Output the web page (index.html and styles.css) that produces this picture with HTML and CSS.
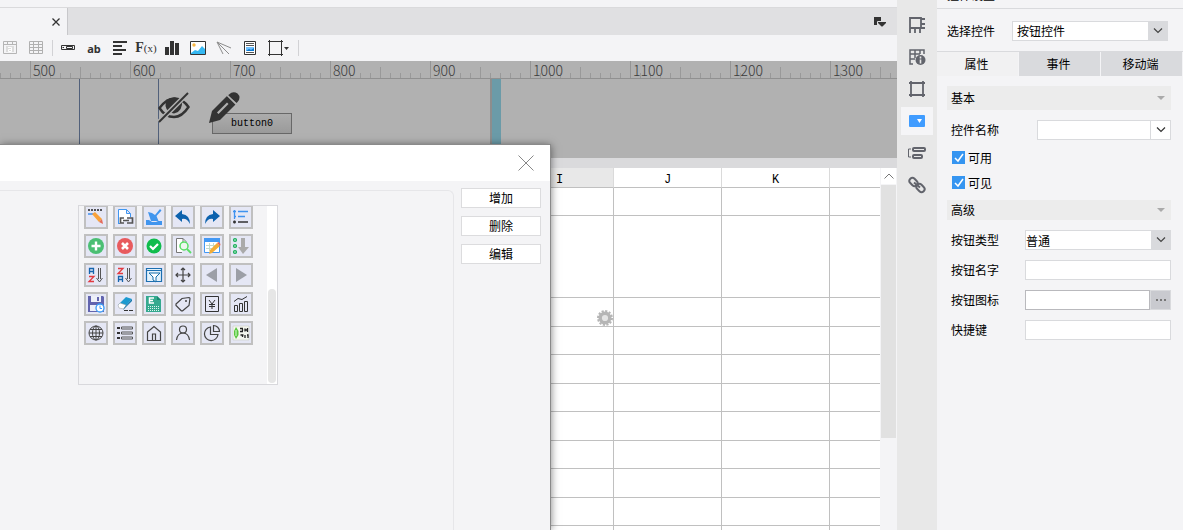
FILE: index.html
```html
<!DOCTYPE html>
<html lang="zh-CN">
<head>
<meta charset="utf-8">
<title>按钮控件</title>
<link rel="stylesheet" href="styles.css">
</head>
<body>
<div class="app">
  <main class="work">
    <div class="strip"></div>
    <div class="tabs">
      <div class="doc-tab"><button class="plain" aria-label="关闭标签"><svg width="10" height="10" viewBox="0 0 10 10"><path d="M1.500 1.500l7 7M8.500 1.500l-7 7" stroke="#333" stroke-width="1.300"/></svg></button></div>
      <button class="plain tab-list" aria-label="标签列表"><svg width="12" height="10" viewBox="0 0 12 10"><path d="M0 0h7v4H4v4H0z" fill="#333"/><path d="M4 5h8v1L8.500 9.500h-1L4 6z" fill="#333"/><path d="M3.500 8V4.500H8" fill="none" stroke="#e0e0e2"/></svg></button>
    </div>
    <div class="toolbar">
      <button class="plain tool" aria-label="文本表格"><svg width="16" height="16" viewBox="0 0 16 16"><g fill="none" stroke="#b5b5b5"><path d="M1.500 1.500h13v12h-13zM1 4.500h14M5.500 1v3M10.500 1v3"/></g><path d="M4 6h8v6H4z" fill="#dcdcdc"/><path d="M6 7.500h3.500v4H6.500v-2H9" fill="none" stroke="#fff"/></svg></button>
      <button class="plain tool" aria-label="表格"><svg width="16" height="16" viewBox="0 0 16 16"><path d="M1.500 1.500h13v12h-13zM1 4.500h14M1 7.500h14M1 10.500h14M5.500 2v12M10.500 2v12" fill="none" stroke="#b0b0b0"/></svg></button>
      <span class="sep"></span>
      <button class="plain tool" aria-label="文本框"><svg width="16" height="16" viewBox="0 0 16 16"><path d="M1.500 5.500h13v4h-13zM4 7.500H2.500M6.500 6.500h6v2h-6z" fill="none" stroke="#333"/></svg></button>
      <button class="plain tool ab">ab</button>
      <button class="plain tool" aria-label="段落"><svg width="16" height="16" viewBox="0 0 16 16"><path d="M1 2h14M1 6h9M1 10h13M1 14h9" stroke="#333" stroke-width="1.800"/></svg></button>
      <button class="plain tool fx">F<small>(x)</small></button>
      <button class="plain tool" aria-label="图表"><svg width="16" height="16" viewBox="0 0 16 16"><path d="M1 7h4v8H1zM6 1h4v14H6zM11 3h4v12h-4z" fill="#333"/></svg></button>
      <button class="plain tool" aria-label="图片"><svg width="16" height="16" viewBox="0 0 16 16"><path d="M.5 1.500h15v13H.5z" fill="#fff" stroke="#333"/><circle cx="4" cy="5" r="1.700" fill="#f9b641"/><path d="M1 13l4-3 3 1 4-5 3 3v5H1z" fill="#35b8f2"/></svg></button>
      <button class="plain tool" aria-label="斜线"><svg width="16" height="16" viewBox="0 0 16 16"><path d="M1 2l14 6M1 2l12 12M1 2l6 12" fill="none" stroke="#8c8c8c"/></svg></button>
      <button class="plain tool" aria-label="图文"><svg width="16" height="16" viewBox="0 0 16 16"><path d="M2.500 1.500h11v13h-11z" fill="#fff" stroke="#333"/><path d="M4 3.500h8M4 5.500h8M4 12.500h8" stroke="#555"/><path d="M4 7h8v4H4z" fill="#71c1ff"/><path d="M4 11l3-2 2 1 3-2v3z" fill="#0876cf"/></svg></button>
      <button class="plain tool wide" aria-label="边框"><svg width="24" height="16" viewBox="0 0 24 16"><path d="M2.500 0v16M14.500 0v16M1 1.500h15M1 14.500h15" stroke="#333"/><path d="M17 7h5l-2.500 3z" fill="#333"/></svg></button>
      <span class="sep"></span>
    </div>
    <div class="ruler"><span>500</span><span>600</span><span>700</span><span>800</span><span>900</span><span>1000</span><span>1100</span><span>1200</span><span>1300</span></div>
    <div class="canvas">
      <i class="guide first"></i><i class="guide second"></i><i class="edge"></i>
      <button class="node">button0</button>
      <svg class="eye" width="32" height="32" viewBox="0 0 32 32"><path d="M1.500 16Q9 6 17 6.500Q25 7 30.500 15Q24 25 16 25Q7 25 1.500 16z" fill="none" stroke="#333" stroke-width="2.400"/><path d="M8 8Q16 3 24 8Q25 20 16 21.500Q9 21 7.500 14z" fill="#333"/><path d="M1 30L30 1" stroke="#b1b1b1" stroke-width="5"/><path d="M1 30L30 1" stroke="#333" stroke-width="2"/></svg>
      <svg class="pencil" width="32" height="32" viewBox="0 0 32 32"><path d="M0 31l3-12L18 4l8.500 8.500L11 28z" fill="#333"/><path d="M20 2.500q4-4 8.500-1 4 4 0 8.500l-1 1L19 3.500z" fill="#333"/><path d="M18 3l9.500 9.500" stroke="#b1b1b1" stroke-width="1.200"/><path d="M8 20.500L18 10.500l1.500 1.500-10 10z" fill="#b1b1b1"/></svg>
    </div>
    <div class="split"></div>
    <div class="sheet-wrap">
      <table class="sheet">
        <colgroup><col class="lead"><col class="unit"><col class="unit"><col class="unit"><col></colgroup>
        <thead><tr><th></th><th class="current">I</th><th>J</th><th>K</th><th></th></tr></thead>
        <tbody>
          <tr class="h28"><td></td><td></td><td></td><td></td><td></td></tr>
          <tr class="h82"><td></td><td></td><td></td><td></td><td></td></tr>
          <tr class="h29"><td></td><td class="gear"><svg width="16" height="16" viewBox="0 0 16 16"><circle cx="8" cy="8" r="7" fill="none" stroke="#b5b5b5" stroke-width="2" stroke-dasharray="2.200 1.460"/><circle cx="8" cy="8" r="4.800" fill="#e4e4e4" stroke="#b5b5b5" stroke-width="3.400"/></svg></td><td></td><td></td><td></td></tr>
          <tr class="h28"><td></td><td></td><td></td><td></td><td></td></tr>
          <tr class="h29"><td></td><td></td><td></td><td></td><td></td></tr>
          <tr class="h28"><td></td><td></td><td></td><td></td><td></td></tr>
          <tr class="h29"><td></td><td></td><td></td><td></td><td></td></tr>
          <tr class="h28"><td></td><td></td><td></td><td></td><td></td></tr>
          <tr class="h29"><td></td><td></td><td></td><td></td><td></td></tr>
          <tr class="h28"><td></td><td></td><td></td><td></td><td></td></tr>
          <tr class="h29"><td></td><td></td><td></td><td></td><td></td></tr>
        </tbody>
      </table>
      <div class="scroll"><button class="plain up" aria-label="向上滚动"><svg width="12" height="8" viewBox="0 0 12 8"><path d="M1.500 6.500L6 2l4.500 4.500" fill="none" stroke="#777"/></svg></button><div class="thumb"></div></div>
    </div>
  </main>

  <nav class="rail">
    <button class="plain" aria-label="单元格元素"><svg width="18" height="18" viewBox="0 0 18 18"><path d="M2 17V2h11v10H2M7 12v5M12 12v5M13 3h4M13 8h4M13 12h4" fill="none" stroke="#62646c" stroke-width="1.800"/></svg></button>
    <button class="plain" aria-label="单元格属性"><svg width="18" height="18" viewBox="0 0 18 18"><path d="M5 16H2V2h14v4M2 6h10M2 11h5M7 2v8M12 2v4" fill="none" stroke="#62646c" stroke-width="1.500"/><circle cx="12.500" cy="12" r="5" fill="#62646c"/><path d="M12.500 8.500v2M12.500 11.500v4" stroke="#e8e8e8" stroke-width="1.600"/></svg></button>
    <button class="plain" aria-label="悬浮元素"><svg width="18" height="18" viewBox="0 0 18 18"><path d="M3 1v16M15 1v16M1 3h16M1 15h16" stroke="#62646c" stroke-width="1.800"/></svg></button>
    <button class="plain active" aria-label="控件设置"><svg width="18" height="18" viewBox="0 0 18 18"><rect x="1" y="3" width="16" height="12" rx="1" fill="#409cff"/><path d="M9 7h5l-2.500 4z" fill="#fff"/></svg></button>
    <button class="plain" aria-label="条件属性"><svg width="18" height="18" viewBox="0 0 18 18"><path d="M3 5H.500v8H3" fill="none" stroke="#62646c"/><rect x="5" y="4" width="12" height="3" rx="1" fill="none" stroke="#62646c" stroke-width="2"/><rect x="5" y="11" width="9" height="3" rx="1" fill="none" stroke="#62646c" stroke-width="2"/></svg></button>
    <button class="plain" aria-label="超级链接"><svg width="18" height="18" viewBox="0 0 18 18"><g fill="none" stroke="#62646c" stroke-width="2"><rect x="1" y="3" width="9" height="6" rx="3" transform="rotate(45 5.500 6)"/><rect x="8" y="9" width="9" height="6" rx="3" transform="rotate(45 12.500 12)"/><path d="M6 6.500l6 5"/></g></svg></button>
  </nav>

  <aside class="panel">
    <div class="panel-title"><span>控件设置</span></div>
    <div class="chooser"><label for="kind">选择控件</label><div class="pick"><select id="kind"><option>按钮控件</option></select><span class="drop"><svg width="10" height="6" viewBox="0 0 10 6"><path d="M1 .5l4 4 4-4" fill="none" stroke="#444" stroke-width="1.200"/></svg></span></div></div>
    <div class="modes"><button class="on">属性</button><button>事件</button><button>移动端</button></div>
    <div class="props">
      <button class="section tall">基本<svg width="8" height="4" viewBox="0 0 8 4"><path d="M0 0h8L4 4z" fill="#aaa"/></svg></button>
      <div class="row name"><label for="name">控件名称</label><div class="combo"><input id="name" type="text"><button aria-label="展开"><svg width="10" height="6" viewBox="0 0 10 6"><path d="M1 .5l4 4 4-4" fill="none" stroke="#333" stroke-width="1.200"/></svg></button></div></div>
      <label class="check"><input type="checkbox" checked>可用</label>
      <label class="check"><input type="checkbox" checked>可见</label>
      <button class="section">高级<svg width="8" height="4" viewBox="0 0 8 4"><path d="M0 0h8L4 4z" fill="#aaa"/></svg></button>
      <div class="row"><label for="type">按钮类型</label><div class="pick flush"><select id="type"><option>普通</option></select><span class="drop"><svg width="10" height="6" viewBox="0 0 10 6"><path d="M1 .5l4 4 4-4" fill="none" stroke="#444" stroke-width="1.200"/></svg></span></div></div>
      <div class="row"><label for="title">按钮名字</label><input id="title" type="text"></div>
      <div class="row"><label for="icon">按钮图标</label><div class="browse"><input id="icon" type="text"><button aria-label="选择图标"><svg width="12" height="2" viewBox="0 0 12 2"><path d="M1 0h2v2H1zM5 0h2v2H5zM9 0h2v2H9z" fill="#777"/></svg></button></div></div>
      <div class="row"><label for="key">快捷键</label><input id="key" type="text"></div>
    </div>
  </aside>

  <section class="dialog" role="dialog" aria-label="图标">
    <header><button class="plain" aria-label="关闭"><svg width="16" height="16" viewBox="0 0 16 16"><path d="M.5 .5l15 15M15.500 .5l-15 15" stroke="#888"/></svg></button></header>
    <div class="dialog-body">
      <div class="group">
        <div class="icon-box">
          <div class="icons">
            <button><svg viewBox="0 0 20 20"><path d="M2 3h14" stroke="#222" stroke-width="1.500" stroke-dasharray="2 1"/><path d="M2 7h6" stroke="#3c8fee" stroke-width="1.500"/><path d="M6 7l3-2 7 7-3 3z" fill="#f9a23b"/><path d="M13 15l3-3 1 5z" fill="#e46b5b"/></svg></button>
            <button><svg viewBox="0 0 20 20"><path d="M3.500 17V2.500h8l4 4V10M11.500 2.500v4h4M3 16.500h2" fill="#fff" stroke="#4096f0"/><path d="M9 11H5.500v5H9M12 11h5.500v5H12M8 13.500h6" fill="none" stroke="#555" stroke-width="1.700"/></svg></button>
            <button><svg viewBox="0 0 20 20"><path d="M4 5l4 1 3 2 5-6 1.500 1.500L12.500 9l2 5H7z" fill="#4095ee"/><path d="M2 13h3l3 2h4l2-1h4v4H2z" fill="#4095ee"/></svg></button>
            <button><svg viewBox="0 0 20 20"><path d="M2 9l7-6v4q8 1 8 10-3-6-8-5v3z" fill="#0c62ae"/></svg></button>
            <button><svg viewBox="0 0 20 20"><path d="M18 9l-7-6v4q-8 1-8 10 3-6 8-5v3z" fill="#0c62ae"/></svg></button>
            <button><svg viewBox="0 0 20 20"><path d="M3.500 3v9M2 4.500h3M7 4.500h10M3 9.500h2M7 9.500h7" fill="none" stroke="#3f92ef" stroke-width="1.300"/><path d="M2 15h3M3.500 13.500v3M7 15h10" stroke="#333" stroke-width="1.600"/></svg></button>

            <button><svg viewBox="0 0 20 20"><circle cx="10" cy="10" r="8" fill="#4bbf73"/><path d="M10 5.500v9M5.500 10h9" stroke="#fff" stroke-width="2.400"/></svg></button>
            <button><svg viewBox="0 0 20 20"><circle cx="10" cy="10" r="8" fill="#e85b5e"/><path d="M7 7l6 6M13 7l-6 6" stroke="#fff" stroke-width="2.600"/></svg></button>
            <button><svg viewBox="0 0 20 20"><circle cx="10" cy="10" r="7.500" fill="#10bc4c"/><path d="M6 10l3 3 5-5" fill="none" stroke="#fff" stroke-width="2.200"/></svg></button>
            <button><svg viewBox="0 0 20 20"><path d="M9 16.500H3.500v-14H10l3 3v2M10 2.500v4" fill="#fff" stroke="#777"/><circle cx="11" cy="10" r="4" fill="#edf7ee" stroke="#59df65" stroke-width="1.500"/><path d="M14 13l4 4" stroke="#59df65" stroke-width="1.800"/></svg></button>
            <button><svg viewBox="0 0 20 20"><path d="M2.500 2.500h15v14h-15z" fill="#fff" stroke="#4298f4"/><path d="M2 2h16v4H2z" fill="#4298f4"/><path d="M4 9.500h10M4 12.500h8M7.500 7v8M11.500 7v4" stroke="#c3d9ca"/><path d="M15 7l3 3-8 7-3 1 1-4z" fill="#f2ad38"/><path d="M15 7l1.500-1 2 2-.5 2z" fill="#e86555"/></svg></button>
            <button><svg viewBox="0 0 20 20"><g fill="#98ddb4" stroke="#18ae59" stroke-width="1.200"><circle cx="4" cy="4" r="1.500"/><circle cx="4" cy="10" r="1.500"/><circle cx="4" cy="16" r="1.500"/></g><path d="M10 2h4v9h4l-6 7-5-7h3z" fill="#aaa"/></svg></button>

            <button><svg viewBox="0 0 20 20"><path d="M3.500 9V3.500h4V9M3.500 6.500h4" fill="none" stroke="#1565ad" stroke-width="1.300"/><path d="M3 11.500h5l-5 5h5" fill="none" stroke="#e23b40" stroke-width="1.300"/><path d="M12.500 3v11M14.500 3v11M10.500 13l3 4 3-4" fill="none" stroke="#555"/></svg></button>
            <button><svg viewBox="0 0 20 20"><path d="M3 3.500h5l-5 5h5" fill="none" stroke="#e23b40" stroke-width="1.300"/><path d="M3.500 17v-5.500h4V17M3.500 14.500h4" fill="none" stroke="#1565ad" stroke-width="1.300"/><path d="M12.500 3v11M14.500 3v11M10.500 13l3 4 3-4" fill="none" stroke="#555"/></svg></button>
            <button><svg viewBox="0 0 20 20"><path d="M2.500 3.500h15v13h-15zM2 5.500h16" fill="#e4f2fb" stroke="#1c6fb0" stroke-width="1.200"/><path d="M5 8h11l-4 4v5l-3-2v-3z" fill="#fff" stroke="#146da9"/></svg></button>
            <button><svg viewBox="0 0 20 20"><path d="M10 3v14M3 10h14M8 5l2-2 2 2M8 15l2 2 2-2M5 8l-2 2 2 2M15 8l2 2-2 2" fill="none" stroke="#444" stroke-width="1.200"/></svg></button>
            <button><svg viewBox="0 0 20 20"><path d="M4 10l11-7v14z" fill="#9c9fa7"/></svg></button>
            <button><svg viewBox="0 0 20 20"><path d="M16 10L5 3v14z" fill="#9c9fa7"/></svg></button>

            <button><svg viewBox="0 0 20 20"><path d="M2 2h15l1 1v15H2z" fill="#6264ae"/><path d="M5 2h10v6H5zM4 11h10v6H4z" fill="#edf0f8"/><path d="M11 3h2v4h-2z" fill="#6264ae"/><circle cx="14" cy="14" r="4" fill="#fff" stroke="#389af6" stroke-width="1.300"/><path d="M14 11.500v3h2" fill="none" stroke="#389af6"/></svg></button>
            <button><svg viewBox="0 0 20 20"><path d="M3 11l8-8 6 2-8 9z" fill="#1b9ad0"/><path d="M3 11l2-2 6 2-2 4-5-1z" fill="#fff" stroke="#999" stroke-width=".5"/><path d="M17 5l-8 9-1 2 9-9z" fill="#1776a9"/><path d="M9 16.500h9" stroke="#333" stroke-dasharray="4 1"/></svg></button>
            <button><svg viewBox="0 0 20 20"><path d="M2 2h11l4 4v12H2z" fill="#35a98e"/><path d="M13 2v4h4z" fill="#168a70"/><path d="M10 4H5.500v5H10M5.500 6.500H9" fill="none" stroke="#fff" stroke-width="1.500"/><path d="M4 12.500h12M4 14.500h12M4 16.500h12" stroke="#dff6ef" stroke-dasharray="1 1"/></svg></button>
            <button><svg viewBox="0 0 20 20"><path d="M3 10l6-5.500 7-1q1 0 1 1l-1 7-6 5q-1 1-2 0l-5-5z" fill="none" stroke="#444" stroke-width="1.200"/><circle cx="13" cy="7" r="1" fill="#444"/></svg></button>
            <button><svg viewBox="0 0 20 20"><path d="M3.500 2.500h13v15h-13z" fill="none" stroke="#333"/><path d="M7 6l3 4 3-4M10 10v5M7 10.500h6M7 12.500h6" fill="none" stroke="#333"/></svg></button>
            <button><svg viewBox="0 0 20 20"><path d="M3.500 11.500h3v6h-3zM8.500 9.500h3v8h-3zM13.500 7.500h3v10h-3zM3 7.500l4-3 4 1 5-3" fill="none" stroke="#333"/></svg></button>

            <button><svg viewBox="0 0 20 20"><g fill="none" stroke="#444"><circle cx="10" cy="10" r="7"/><ellipse cx="10" cy="10" rx="3.500" ry="7"/><path d="M3 10h14M10 3v14M4 6.500h12M4 13.500h12"/></g></svg></button>
            <button><svg viewBox="0 0 20 20"><path d="M2 5h3M2 10h3M2 15h3" stroke="#333" stroke-width="2"/><path d="M6.500 4h11v2h-11zM6.500 9h11v2h-11zM6.500 14h11v2h-11z" fill="none" stroke="#555"/></svg></button>
            <button><svg viewBox="0 0 20 20"><path d="M3.500 9L10 3.500 16.500 9v8.500h-13zM8.500 17v-6h3v6" fill="none" stroke="#444" stroke-width="1.200"/></svg></button>
            <button><svg viewBox="0 0 20 20"><circle cx="10" cy="6.500" r="3.500" fill="none" stroke="#444" stroke-width="1.200"/><path d="M3.500 17q1-7 6.500-7t6.500 7" fill="none" stroke="#444" stroke-width="1.200"/></svg></button>
            <button><svg viewBox="0 0 20 20"><path d="M8.500 4v7.500H16A6.800 6.800 0 1 1 8.500 4zM11.500 2.500v6h6a6 6 0 0 0-6-6z" fill="none" stroke="#444" stroke-width="1.200"/></svg></button>
            <button><svg viewBox="0 0 20 20"><path d="M2 3h16v14H2z" fill="#f4f6ee" stroke="#c9ccc4" stroke-width=".6"/><path d="M5 4l2.500 4v4L5 16l-2-4V8z" fill="#5ac63e"/><path d="M5 7v6" stroke="#d8ffd1"/><path d="M9 5.500h3M9 8.500h3M11.500 6v2M14 5.500v3M16.500 5v4M14 7h2M9.500 12h3M11.500 12v2M14 12v3M16 12h1v3" fill="none" stroke="#222" stroke-width="1.300"/></svg></button>
          </div>
          <div class="icon-scroll"><i></i></div>
        </div>
      </div>
      <div class="actions"><button>增加</button><button>删除</button><button>编辑</button></div>
    </div>
  </section>
</div>
</body>
</html>
```
FILE: styles.css
```css
* { box-sizing: border-box; }
body, button, input, select { font-family: "Noto Sans CJK SC", sans-serif; font-size: 12px; color: #000; }
body { margin: 0; background: #f4f4f6; line-height: 18px; }
button { padding: 0; border: 0; border-radius: 0; line-height: 18px; }
svg { display: block; flex: none; }
.plain { display: flex; align-items: center; justify-content: center; background: none; }
.app { position: relative; display: flex; height: 100vh; overflow: hidden; }
.work { flex: 1; min-width: 0; display: flex; flex-direction: column; overflow: hidden; }
.strip { flex: none; height: 7px; }
.tabs { flex: none; height: 28px; display: flex; justify-content: space-between; align-items: center; background: #e0e0e2; border-top: 1px solid #dadadc; padding-right: 11px; }
.doc-tab { width: 68px; height: 100%; display: flex; align-items: center; justify-content: flex-end; padding-right: 6px; background: #f4f4f6; border-right: 1px solid #c8c8cb; }

.toolbar { flex: none; height: 26px; display: flex; align-items: center; gap: 2px; margin-left: -2px; }
.tool { width: 24px; height: 24px; flex: none; }
.wide { width: 30px; }
.sep { width: 1px; height: 16px; margin: 0 1px 0 2px; background: #d2d2d5; }
.ab { font: bold 11px "Noto Sans", sans-serif; color: #333; }
.fx { font: bold 14px "Liberation Serif", serif; color: #333; }
.fx small { font-size: 11px; font-weight: normal; }

.ruler { flex: none; height: 18px; padding-left: 30px; display: flex; overflow: hidden; border-bottom: 1px solid #909090; background: repeating-linear-gradient(90deg, #999 0 1px, transparent 1px 10px) 0 12px / 100% 5px no-repeat, repeating-linear-gradient(90deg, transparent 0 30px, #999 30px 31px, transparent 31px 50px) 0 6px / 100% 11px no-repeat, #b1b1b1; }
.ruler span { flex: none; width: 100px; padding-left: 2px; border-left: 1px solid #949494; color: #3b3b3b; font-size: 14px; font-weight: 300; line-height: 19px; }

.canvas { flex: none; position: relative; height: 79px; overflow: hidden; background: #b1b1b1; }
.guide, .edge { position: absolute; top: 0; bottom: 0; }
.guide { width: 1px; background: #52617b; }
.first { left: 79px; }
.second { left: 158px; }
.edge { left: 490px; width: 11px; background: #6b9ba8; border-left: 2px solid #8d8d8d; }
.node { position: absolute; left: 212px; top: 34px; width: 80px; height: 21px; border: 1px solid #686868; background: linear-gradient(#acacac, #9a9a9a); font: 10px "Liberation Mono", monospace; }
.eye { position: absolute; left: 158px; top: 13px; }
.pencil { position: absolute; left: 209px; top: 13px; }
.split { flex: none; height: 10px; background: #dadadc; }

.sheet-wrap { flex: 1; min-height: 0; display: flex; align-items: flex-start; overflow: hidden; }
.sheet { flex: 1; width: 0; table-layout: fixed; border-collapse: separate; border-spacing: 0; background: #fff; }
.lead { width: 506px; }
.unit { width: 108px; }
th, td { padding: 0; border-right: 1px solid #c0c0c0; border-bottom: 1px solid #c0c0c0; }
th { height: 20px; padding-top: 4px; font: 12px "Liberation Mono", monospace; border-right-color: #dadada; }
.current { background: #e8e8e8; }
th:last-child, td:last-child { border-right: 0; }
.h28 { height: 28px; }
.h29 { height: 29px; }
.h82 { height: 82px; }
.gear { vertical-align: bottom; }
.gear svg { margin-left: auto; }
.scroll { flex: none; width: 17px; height: 270px; padding: 0 1px; display: flex; flex-direction: column; }
.up { height: 16px; margin-bottom: 1px; background: #fff; }
.thumb { flex: 1; background: #e1e1e1; }

.rail { flex: none; width: 40px; padding-top: 11px; display: flex; flex-direction: column; align-items: center; gap: 4px; background: #e8e8e8; }
.rail button { width: 32px; height: 28px; }
.rail .active { background: #f5f5f7; }

.panel { flex: none; width: 246px; background: #f4f4f6; }
.panel-title { height: 9px; padding: 0 0 5px 10px; display: flex; align-items: flex-end; line-height: 16px; overflow: hidden; border-bottom: 1px solid #d9dadd; }
.chooser { height: 43px; padding: 1px 15px 0 10px; display: flex; align-items: center; gap: 17px; border-bottom: 1px solid #d9dadd; }
.chooser .pick { flex: 1; }
.pick { position: relative; height: 20px; }
.pick select { width: 100%; height: 20px; padding: 0 20px 0 4px; display: block; appearance: none; border: 1px solid #d9dadd; border-radius: 0; background: #fff; }
.flush select { padding-left: 0; }
.drop { position: absolute; right: 0; top: 0; width: 20px; height: 20px; display: flex; align-items: center; justify-content: center; background: #d9dadd; pointer-events: none; }
.modes { display: grid; grid-template-columns: repeat(3, 1fr); gap: 1px; padding-right: 1px; }
.modes button { height: 24px; padding-right: 2px; background: #d9dadd; }
.modes .on { background: #f1f1f2; }
.props { padding: 10px 12px 0 10px; }
.section { width: 100%; height: 20px; padding: 0 6px 0 4px; display: flex; align-items: center; justify-content: space-between; background: #ececec; }
.tall { height: 24px; }
.row { margin-top: 10px; padding-left: 4px; display: grid; grid-template-columns: 74px 1fr; align-items: center; height: 20px; }
.row input { width: 100%; min-width: 0; height: 20px; border: 1px solid #d9dadd; border-radius: 0; background: #fff; }
.name { grid-template-columns: 86px 1fr; margin-bottom: 5px; }
.combo, .browse { display: flex; }
.combo button { flex: none; width: 20px; display: flex; align-items: center; justify-content: center; border: 1px solid #d9dadd; border-left: 0; background: #fff; }
.browse input { border-color: #b9b9bd; }
.browse button { flex: none; width: 21px; display: flex; align-items: center; justify-content: center; border: 1px solid #d9dadd; background: #c9cacf; }
.check { height: 25px; padding-left: 5px; display: flex; align-items: center; gap: 3px; }
.check input { width: 13px; height: 13px; margin: 0; appearance: none; background: #3595f1 url("data:image/svg+xml,%3Csvg xmlns='http://www.w3.org/2000/svg' viewBox='0 0 13 13'%3E%3Cpath d='M3 7l3 3 5-7' fill='none' stroke='white' stroke-width='1.500'/%3E%3C/svg%3E"); }
.check + .section { margin-top: 5px; }

.dialog { position: absolute; left: 0; top: 145px; bottom: 0; width: 550px; display: flex; flex-direction: column; background: #f4f4f6; box-shadow: 0 0 0 1px #8a8a8a, 1px 0 8px rgba(0, 0, 0, .5); }
.dialog header { flex: none; height: 36px; padding-right: 16px; display: flex; align-items: center; justify-content: flex-end; background: #fff; }
.dialog-body { flex: 1; display: flex; gap: 7px; padding-right: 9px; }
.group { flex: 1; margin-top: 9px; padding: 14px 0 0 78px; border: 1px solid #e6e6e9; border-width: 1px 1px 0 0; border-top-right-radius: 6px; }
.icon-box { width: 200px; height: 180px; display: flex; justify-content: space-between; overflow: hidden; border: 1px solid #d8d8dc; }
.icons { display: grid; grid-template-columns: repeat(6, 24px); grid-auto-rows: 24px; gap: 5px; align-content: start; margin: -1px 0 0 5px; }
.icons button { border: 2px solid #c0c0c0; background: #e5e7f5; }
.icons svg { width: 20px; height: 20px; }
.icon-scroll { width: 10px; padding: 83px 1px 1px; display: flex; background: #fff; }
.icon-scroll i { flex: 1; border-radius: 4px; background: #e6e6e6; }
.actions { width: 80px; padding-top: 7px; display: flex; flex-direction: column; gap: 8px; }
.actions button { height: 20px; border: 1px solid #dcdcde; background: #fff; }
```
